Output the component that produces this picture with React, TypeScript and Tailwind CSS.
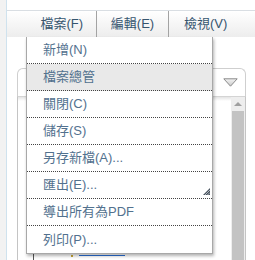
import React from "react";

const items = [
  "新增(N)",
  "檔案總管",
  "關閉(C)",
  "儲存(S)",
  "另存新檔(A)...",
  "匯出(E)...",
  "導出所有為PDF",
  "列印(P)...",
];

export default function App() {
  const font = { fontFamily: '"Liberation Sans", "Noto Sans CJK TC", sans-serif' };
  return (
    <div className="flex w-[255px] h-[260px] overflow-hidden bg-white" style={font}>
      <div className="w-[6px] h-full bg-[#f2f2f2] shrink-0" />
      <div className="w-px h-full bg-[#cfe2ee] shrink-0" />
      <div className="relative flex-1 flex flex-col">
        <div className="h-[10px] bg-white" />
        <div className="h-[27px] flex border-t border-[#d9dee3] bg-gradient-to-b from-white to-[#ededed] text-[13px] text-[#36556f]">
          <div className="w-[90px] flex items-center justify-end pr-[13px] border-r border-[#a3a3a3]">檔案(F)</div>
          <div className="w-[72px] flex items-center justify-center border-r border-[#a3a3a3]">編輯(E)</div>
          <div className="flex-1 flex items-center pl-[15px]">檢視(V)</div>
        </div>
        <div className="flex-1 pl-[10px] pt-[31px] flex flex-col">
          <div className="w-[229px] h-[28px] border border-b-0 border-[#cfcfcf] rounded-t-[6px] bg-white flex items-center justify-end pr-[7px]">
            <svg width="15" height="9" viewBox="0 0 15 9">
              <defs>
                <linearGradient id="g" x1="0" y1="0" x2="0" y2="1">
                  <stop offset="0" stopColor="#f4f4f4" />
                  <stop offset="1" stopColor="#c9c9c9" />
                </linearGradient>
              </defs>
              <path d="M0.8 0.8 H14.2 L7.5 8.2 Z" fill="url(#g)" stroke="#8a8a8a" strokeWidth="1" />
            </svg>
          </div>
          <div className="w-[229px] flex-1 border-l border-r border-[#c4c4c4] border-t border-t-[#d4d4d4] flex">
            <div className="flex-1 relative bg-gradient-to-b from-[#e4e4e4] via-white to-white bg-[length:100%_8px] bg-no-repeat">
              <div className="absolute left-[15px] top-[157px] w-px h-[10px] bg-[#555]" />
              <div className="absolute left-[53px] top-[158px] w-[2px] h-[2px] bg-[#c9a93a]" />
              <div className="absolute left-[61px] top-[158px] w-[46px] h-px bg-[#2a6fd6]" />
            </div>
            <div className="w-[14px] bg-[#eeeeee] flex flex-col items-center">
              <svg width="14" height="14" viewBox="0 0 14 14" className="shrink-0">
                <path d="M3 9 L7 5 L11 9 Z" fill="#a0a0a0" />
              </svg>
              <div className="w-[12px] flex-1 bg-[#c3c3c3]" />
            </div>
          </div>
        </div>
        <div className="absolute left-[19px] top-[37px] w-[187px] bg-white border-l border-r border-b border-[#a8a8a8] shadow-[1px_2px_3px_rgba(0,0,0,0.3)] text-[13px] text-[#52718e]">
          {items.map((t, i) => (
            <div
              key={t}
              className={`relative h-[27px] flex items-center pl-[16px] ${i < items.length - 1 ? "border-b border-dotted border-[#444]" : ""} ${i === 1 ? "bg-[#e9e9e9]" : ""}`}
            >
              {t}
              {i === 5 && (
                <svg className="absolute right-[2px] bottom-[3px]" width="7" height="7" viewBox="0 0 7 7">
                  <path d="M7 0 L7 7 L0 7 Z" fill="#4a5560" />
                  <path d="M2 7 L7 2 M4.5 7 L7 4.5" stroke="#dfe3e6" strokeWidth="0.7" />
                </svg>
              )}
            </div>
          ))}
        </div>
      </div>
    </div>
  );
}
